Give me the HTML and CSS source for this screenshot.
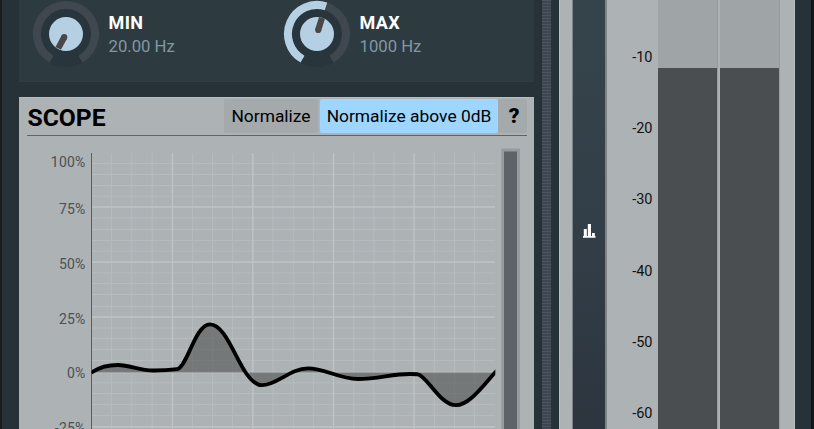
FILE: index.html
```
<!DOCTYPE html>
<html lang="en">
<head>
<meta charset="utf-8">
<title>Scope</title>
<link rel="stylesheet" href="styles.css">
</head>
<body>
<div class="app">
  <main class="left">
    <section class="knobs">
      <div class="knob">
        <svg class="dial" width="70" height="70" viewBox="0 0 70 70">
          <circle cx="35" cy="35" r="33" fill="#29353c"/>
          <path d="M20.5 60.1A29 29 0 1 1 49.5 60.1" fill="none" stroke="#40484f" stroke-width="8"/>
          <circle cx="35" cy="35" r="17" fill="#b5d0e3"/>
          <path d="M33.2 38.2L27.2 49.4" stroke="#494748" stroke-width="6.2"/><circle cx="33.2" cy="38.2" r="3.1" fill="#494748"/>
        </svg>
        <div class="info"><b>MIN</b><span>20.00 Hz</span></div>
      </div>
      <div class="knob">
        <svg class="dial" width="70" height="70" viewBox="0 0 70 70">
          <circle cx="35" cy="35" r="33" fill="#29353c"/>
          <path d="M20.5 60.1A29 29 0 1 1 49.5 60.1" fill="none" stroke="#40484f" stroke-width="8"/>
          <path d="M20.5 60.1A29 29 0 0 1 44 7.4" fill="none" stroke="#b5d0e3" stroke-width="8"/>
          <circle cx="35" cy="35" r="17" fill="#b5d0e3"/>
          <path d="M36.2 31L40 18.8" stroke="#494748" stroke-width="6.2"/><circle cx="36.2" cy="31" r="3.1" fill="#494748"/>
        </svg>
        <div class="info"><b>MAX</b><span>1000 Hz</span></div>
      </div>
    </section>
    <section class="scope">
      <header class="bar">
        <h1>SCOPE</h1>
        <button class="btn norm">Normalize</button>
        <button class="btn above">Normalize above 0dB</button>
        <button class="btn help">?</button>
      </header>
      <svg class="chart" width="515" height="293" viewBox="19 136 515 293">
        <defs>
          <clipPath id="plot"><rect x="91.5" y="150" width="403.8" height="279"/></clipPath>
        </defs>
        <path class="minor" d="M111.5 153V429M131.7 153V429M152.2 153V429M192.5 153V429M212.5 153V429M232.5 153V429M273 153V429M293.3 153V429M313.3 153V429M353.7 153V429M373.8 153V429M394 153V429M434.5 153V429M454.5 153V429M474.5 153V429"/>
        <path class="minor" d="M92 163.5H495M92 174.5H495M92 185.5H495M92 196.2H495M92 217.8H495M92 229.5H495M92 240.5H495M92 251.2H495M92 272.8H495M92 283.5H495M92 294.5H495M92 306.5H495M92 328H495M92 338.5H495M92 349.5H495M92 360.5H495M92 382.8H495M92 393.5H495M92 404.5H495M92 415.5H495"/>
        <path class="major" d="M172.5 153V429M252.8 153V429M333.5 153V429M414 153V429M92 207H495M92 262H495M92 317H495M92 372.5H495M92 426.8H495"/>
        <path class="axis" d="M91.5 153V429"/>
        <g clip-path="url(#plot)">
          <path class="area" d="M91 372.8C98 368 107 365 118 365C130 365 140 370.8 154 370.5C164 370.5 172 369.8 177 369.2C187 368 195 324.3 210 324.3C225 324.3 235 358 247 374.5C251 380 256 385.2 262 385.2C277 385.2 290 368.3 308 368.3C325 368.3 338 378.8 358 379C378 379 392 374 410 374C413 374 416 374 418 374.3C427 376 440 405.2 456 405.2C470 405.2 484 384 497 370.5V372.6H91Z"/>
          <path class="wave" d="M91 372.8C98 368 107 365 118 365C130 365 140 370.8 154 370.5C164 370.5 172 369.8 177 369.2C187 368 195 324.3 210 324.3C225 324.3 235 358 247 374.5C251 380 256 385.2 262 385.2C277 385.2 290 368.3 308 368.3C325 368.3 338 378.8 358 379C378 379 392 374 410 374C413 374 416 374 418 374.3C427 376 440 405.2 456 405.2C470 405.2 484 384 497 370.5"/>
        </g>
        <g class="ticks">
          <text x="85.5" y="167">100%</text>
          <text x="85.5" y="213.5">75%</text>
          <text x="85.5" y="268.5">50%</text>
          <text x="85.5" y="323.5">25%</text>
          <text x="85.5" y="378">0%</text>
          <text x="85.5" y="433">-25%</text>
        </g>
        <rect x="501.3" y="148.5" width="18.7" height="290" fill="#969b9e"/>
        <rect x="504" y="151.5" width="13" height="290" fill="#5d6366"/>
      </svg>
    </section>
  </main>
  <div class="splitter"></div>
  <aside class="right">
    <div class="edge"></div>
    <nav class="tool">
      <svg width="13" height="14" viewBox="0 0 13 14" fill="#fff"><path d="M0 12h12.5v1.7H0zM.8 5h3v7H.8zM4.8 0h3.2v12H4.8zM9 9h2.8v3H9z"/></svg>
    </nav>
    <div class="scale">
      <span>-10</span><span>-20</span><span>-30</span><span>-40</span><span>-50</span><span>-60</span>
    </div>
    <div class="meters"><div class="meter"></div><div class="meter"></div></div>
  </aside>
</div>
</body>
</html>
```
FILE: styles.css
```
* { box-sizing: border-box; }
body { margin: 0; font-family: Roboto, sans-serif; background: #263238; }
.app {
  display: flex;
  width: 814px;
  height: 429px;
  overflow: hidden;
  border-left: 2px solid #171c1e;
  border-right: 3px solid #14171a;
}
.left { width: 532px; padding-left: 17px; flex: none; }
.knobs {
  display: flex;
  height: 82px;
  background: #2d3a40;
  border-bottom: 1px solid #303c42;
}
.knob { display: flex; width: 251px; height: 70px; padding-left: 12px; margin-top: -1px; }
.dial { flex: none; }
.info { margin: 12px 0 0 7.5px; display: flex; flex-direction: column; white-space: nowrap; }
.info b { font-size: 18px; line-height: 24px; letter-spacing: .4px; color: #fff; }
.info span { font-size: 16.7px; line-height: 24px; color: #8297a4; }
.scope { margin-top: 14.5px; height: 333px; background: #adb2b5; border-top: 1px solid #b7bcbf; }
.bar {
  display: flex;
  align-items: center;
  height: 38.5px;
  margin: 0 7px 0 8px;
  border-bottom: 1px solid #5e6467;
}
h1 { margin: 3px auto 0 .5px; font-size: 24.7px; line-height: 30px; font-weight: 700; color: #000; }
.btn {
  height: 34px;
  padding: 0;
  border: 0;
  border-radius: 2px;
  background: #a4a9ac;
  color: #000;
  font: 17.4px Roboto, sans-serif;
  white-space: nowrap;
}
.norm { width: 94px; margin-right: 2px; }
.above { width: 178px; background: #9ed6ff; }
.help { width: 29px; padding-left: 3px; font-weight: 900; font-size: 21px; }
.chart { display: block; }
.minor { stroke: #b6bbbe; stroke-width: 1; fill: none; }
.major { stroke: #bfc3c6; stroke-width: 1.4; fill: none; }
.axis { stroke: #595e61; stroke-width: 1; }
.area { fill: rgba(60, 61, 61, .5); }
.wave { fill: none; stroke: #000; stroke-width: 3.8; stroke-linejoin: round; }
.ticks text { font-size: 14px; fill: #4b5053; text-anchor: end; letter-spacing: .2px; }
.splitter {
  flex: none;
  width: 9.5px;
  margin: 0 7.5px 0 7.5px;
  background: repeating-linear-gradient(#4c555d 0 1px, #3e474f 1px 3px);
}
.right { display: flex; flex: none; width: 236.5px; background: #adb2b5; border-right: 1px solid #b9bec1; }
.edge { width: 13.5px; border-left: 1px solid #b9bec1; }
.tool {
  display: flex;
  align-items: center;
  justify-content: center;
  width: 35px;
  padding: 33px 0 0 1px;
  background: linear-gradient(#35444b 0, #333f48 50%, #2d353f);
  border-left: 1px solid #7d8386;
  border-right: 2px solid #7d8386;
}
.scale { width: 45.5px; padding-top: 21.8px; text-align: right; }
.scale span { display: block; height: 71.3px; line-height: 71.3px; font-size: 14.5px; color: #111; }
.meters { display: flex; gap: 2px; margin-left: 5.5px; }
.meter { width: 60px; background: linear-gradient(#9fa4a6 68.5px, #4a4e51 68.5px); border-right: 1px solid #979c9f; }
```
